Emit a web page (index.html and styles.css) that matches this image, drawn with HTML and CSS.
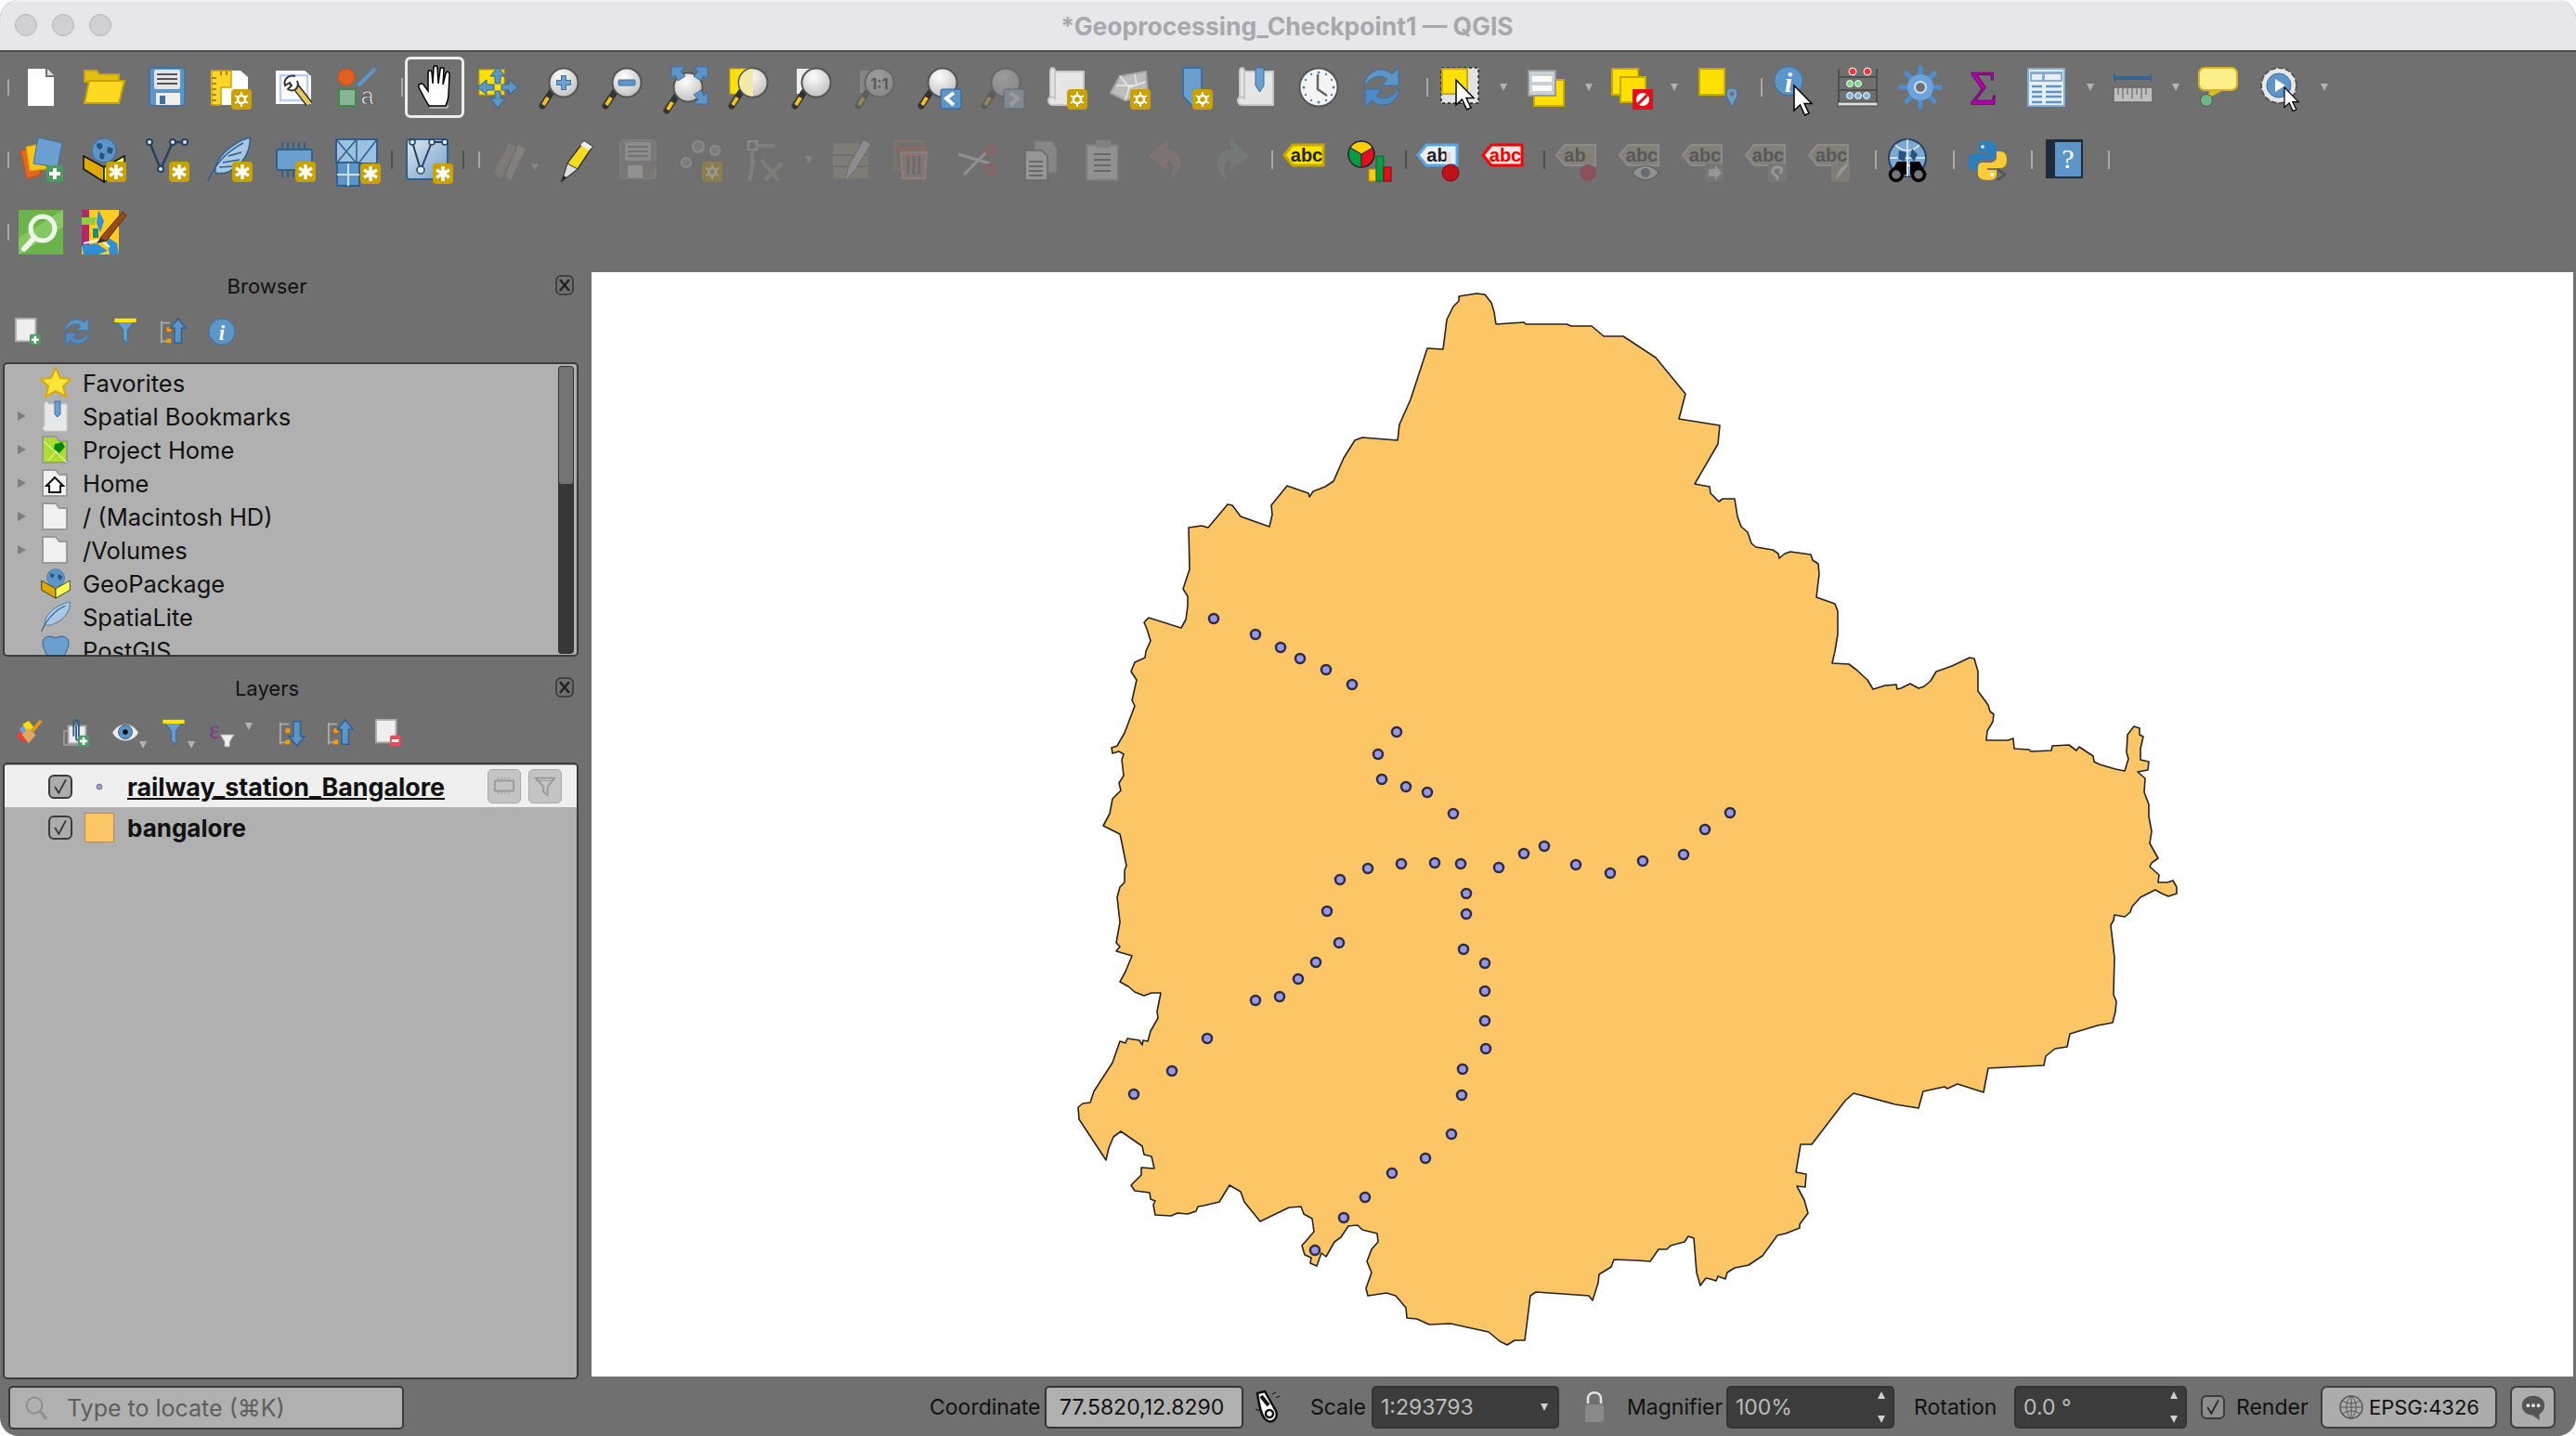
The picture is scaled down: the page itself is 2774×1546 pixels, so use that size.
FILE: index.html
```html
<!DOCTYPE html>
<html lang="en">
<head>
    <meta charset="UTF-8">
    <title>*Geoprocessing_Checkpoint1 — QGIS</title>
    <link rel="stylesheet" href="styles.css">
</head>
<body>
<svg class="defs" width="0" height="0">
    <defs>
        <radialGradient id="glass" cx="40%" cy="30%" r="80%"><stop offset="0" stop-color="#fff"/><stop offset="1" stop-color="#b9b9b9"/></radialGradient>
        <linearGradient id="paleblue" x1="0" y1="0" x2="1" y2="1"><stop offset="0" stop-color="#dfe9f3"/><stop offset="1" stop-color="#6f9cc7"/></linearGradient>
        <g id="lens">
            <path d="M12 27L2 42" stroke="#333" stroke-width="7" stroke-linecap="round"/>
            <path d="M8 33L3 41" stroke="#f5c518" stroke-width="4"/>
            <circle cx="25" cy="17" r="15.5" fill="url(#glass)" stroke="#555" stroke-width="2"/>
        </g>
        <g id="cursor"><path d="M0 0V27L6.500 21 11.500 32 16 30 11 19.500H19Z" fill="#fff" stroke="#000" stroke-width="1.500"/></g>
        <g id="star">
            <rect width="22" height="22" rx="4" fill="#c9a200"/>
            <path d="M11 3V19M4 7L18 15M18 7L4 15" stroke="#fff" stroke-width="3.500"/>
        </g>
        <g id="sun">
            <rect width="22" height="22" rx="4" fill="#c9a200"/>
            <path d="M11 3V19M4 7L18 15M18 7L4 15" stroke="#fff" stroke-width="2"/>
            <circle cx="11" cy="11" r="4" fill="#c9a200" stroke="#fff" stroke-width="2.500"/>
        </g>
        <g id="plus">
            <rect width="18" height="18" rx="3" fill="#4f9a5e"/>
            <path d="M9 3V15M3 9H15" stroke="#fff" stroke-width="4"/>
        </g>
        <g id="scroll">
            <path d="M5 5C5 0 10 0 10 5H41V41H8C2 41 2 34 5 33Z" fill="#e6e6e6" stroke="#c9c9c9" stroke-width="2"/>
            <path d="M10 5V34C8 32 6 32 5 33" fill="none" stroke="#bbb" stroke-width="1.500"/>
        </g>
        <g id="tagshape"><path d="M9 0H42V22H9L0 11Z"/></g>
        <g id="sync">
            <path d="M3 21C4 5 22-3 33 8L40 1V20H22L28 13C20 7 10 11 3 21Z" fill="#5c95c8" stroke="#3a6ea5"/>
            <path d="M41 23C40 39 22 47 11 36L4 43V24H22L16 31C24 37 34 33 41 23Z" fill="#4f8ac4" stroke="#3a6ea5"/>
        </g>
        <g id="funnel">
            <path d="M2 2H30L19 16V34L13 28V16Z" fill="#6b9ccb" stroke="#3d6f9f" stroke-width="1.500"/>
            <path d="M2 1H30V6H2Z" fill="#ffe600"/>
        </g>
        <g id="infoball">
            <circle cx="16" cy="16" r="15" fill="#5c95c8" stroke="#3a6ea5"/>
            <text x="16" y="26" class="info-i">i</text>
        </g>
    </defs>
</svg>
<div class="window">
    <header class="titlebar">
        <div class="lights"><span class="light"></span><span class="light"></span><span class="light"></span></div>
        <div class="title">*Geoprocessing_Checkpoint1 — QGIS</div>
    </header>

    <div class="toolbars">
        <div class="tb-row">
            <span class="handle"></span>
            <div class="tb"><svg class="ic" viewBox="0 0 44 44"><path d="M8 2H27V11H36V42H8Z" fill="#fff"/><path d="M29 2L36 9H29Z" fill="#ddd"/></svg></div>
            <div class="tb"><svg class="ic" viewBox="0 0 44 44"><path d="M1 8V4H14L17 8H38V16H1Z" fill="#e3c010" stroke="#c9a400" stroke-width="2"/><path d="M6 15H44L38 39H1Z" fill="#ffd91f" stroke="#c9a400" stroke-width="2"/></svg></div>
            <div class="tb"><svg class="ic" viewBox="0 0 44 44"><rect x="3" y="1" width="38" height="41" rx="4" fill="#5c95c8" stroke="#3d6f9f" stroke-width="1.500"/><rect x="8" y="3" width="28" height="21" rx="2" fill="#e4e4e4"/><path d="M11 8H33M11 13H33M11 18H33" stroke="#555" stroke-width="2"/><rect x="10" y="28" width="26" height="13" fill="#eee"/><rect x="14" y="31" width="6" height="9" fill="#3d6f9f"/></svg></div>
            <div class="tb"><svg class="ic" viewBox="0 0 44 44"><path d="M1 4H33L41 11V41H1Z" fill="#fff"/><path d="M2 4H23V22H12V41H2Z" fill="#ffd52a" stroke="#c9a400" stroke-width="1.500"/><path d="M2 12H7M2 18H7M2 24H7M2 30H7M2 36H7M12 4V9M18 4V9" stroke="#a88a00" stroke-width="2"/><use href="#sun" x="23" y="24"/></svg></div>
            <div class="tb"><svg class="ic" viewBox="0 0 44 44"><path d="M3 4H34L41 10V40H3Z" fill="#fff"/><rect x="8" y="9" width="29" height="27" fill="none" stroke="#b9cdf0" stroke-width="2.500"/><path d="M19 14L39 40" stroke="#333" stroke-width="8"/><path d="M21 17L39 40" stroke="#e9c95c" stroke-width="5"/><path d="M24 10C16 8 11 14 13 20L18 17 20 20 16 24C22 28 29 23 26 15" fill="#fff" stroke="#333" stroke-width="2"/></svg></div>
            <div class="tb"><svg class="ic" viewBox="0 0 44 44"><ellipse cx="11" cy="11" rx="9" ry="9" fill="#e35f20" stroke="#c94e10"/><path d="M25 19L41 3" stroke="#5c95c8" stroke-width="4" stroke-linecap="round"/><rect x="3" y="24" width="18" height="18" fill="#88b594" stroke="#3c8a4d" stroke-width="2"/><text x="26" y="40" class="style-a">a</text></svg></div>
            <span class="sep"></span>
            <div class="tb"><div class="pressed"><svg class="ic" viewBox="0 0 44 44"><path d="M14 45H34L36 41H16Z" fill="#aaa"/><path d="M14 42C10 36 6 28 3 22 2 18 6 17 8 19L13 26V6C13 3 17 3 17 6L18 18 19 1C19-2 23-2 23 1L24 18 26 3C26 0 30 0 30 3L29 19 32 7C33 4 36 5 36 8L35 30C35 35 33 38 32 42Z" fill="#fff" stroke="#000" stroke-width="1.500"/></svg></div></div>
            <div class="tb"><svg class="ic" viewBox="0 0 44 44"><rect x="2" y="3" width="27" height="27" fill="#ffe000" stroke="#c9a800"/><g fill="#5c95c8" stroke="#34648f"><path d="M22 0L30 10H25V18H19V10H14Z"/><path d="M44 22L34 30V25H26V19H34V14Z"/><path d="M22 44L14 34H19V26H25V34H30Z"/><path d="M0 22L10 14V19H18V25H10V30Z"/></g></svg></div>
            <div class="tb"><svg class="ic" viewBox="0 0 44 44"><use href="#lens"/><path d="M17 17H33M25 9V25" stroke="#3d6f9f" stroke-width="6"/><path d="M18 17H32M25 10V24" stroke="#6ba3d6" stroke-width="4"/></svg></div>
            <div class="tb"><svg class="ic" viewBox="0 0 44 44"><use href="#lens"/><rect x="16" y="14" width="18" height="6" rx="1" fill="#5c95c8" stroke="#3d6f9f"/></svg></div>
            <div class="tb"><svg class="ic" viewBox="0 0 44 44"><use href="#lens" transform="translate(-2 5)"/><g fill="#5c95c8" stroke="#3d6f9f"><path d="M5 0H20L15 5 20 10 12 15 9 9 5 13Z"/><path d="M44 0H29L34 5 29 10 37 15 40 9 44 13Z"/><path d="M44 40H29L34 35 29 30 37 25 40 31 44 27Z"/></g></svg></div>
            <div class="tb"><svg class="ic" viewBox="0 0 44 44"><rect x="0" y="2" width="28" height="27" fill="#ffe000" stroke="#c9a800"/><use href="#lens"/><path d="M25 2A15 15 0 0 0 25 32Z" fill="#f2eaa8"/></svg></div>
            <div class="tb"><svg class="ic" viewBox="0 0 44 44"><rect x="4" y="2" width="26" height="27" fill="#eee"/><use href="#lens"/></svg></div>
            <div class="tb off"><svg class="ic" viewBox="0 0 44 44"><rect x="4" y="4" width="26" height="24" fill="#bbb"/><use href="#lens"/><text x="25" y="24" class="ratio">1:1</text></svg></div>
            <div class="tb"><svg class="ic" viewBox="0 0 44 44"><use href="#lens"/><rect x="23" y="24" width="22" height="21" rx="2" fill="#5c95c8" stroke="#2f5f8f"/><path d="M37 28L29 34 37 41" fill="none" stroke="#fff" stroke-width="4"/></svg></div>
            <div class="tb off"><svg class="ic" viewBox="0 0 44 44"><use href="#lens"/><rect x="23" y="24" width="22" height="21" rx="2" fill="#adc4dc" stroke="#2f5f8f"/><path d="M30 28L38 34 30 41" fill="none" stroke="#fff" stroke-width="4"/></svg></div>
            <div class="tb"><svg class="ic" viewBox="0 0 44 44"><use href="#scroll"/><use href="#sun" x="23" y="24"/></svg></div>
            <div class="tb"><svg class="ic" viewBox="0 0 44 44"><path d="M12 10L40 5 42 30 18 36 2 28Z" fill="#bdbdbd" stroke="#a5a5a5" stroke-width="2"/><path d="M12 10L22 22 18 36M22 22L40 16M28 8L30 20M8 20L30 20" fill="none" stroke="#e8e8e8" stroke-width="1.500"/><use href="#sun" x="23" y="24"/></svg></div>
            <div class="tb"><svg class="ic" viewBox="0 0 44 44"><path d="M12 1H32V32L22 42 12 32Z" fill="#6a9fd0" stroke="#3d6f9f" stroke-width="2"/><use href="#sun" x="22" y="24"/></svg></div>
            <div class="tb"><svg class="ic" viewBox="0 0 44 44"><use href="#scroll"/><path d="M22 1H31V20L26.500 27 22 20Z" fill="#6a9fd0" stroke="#3d6f9f"/></svg></div>
            <div class="tb"><svg class="ic" viewBox="0 0 44 44"><circle cx="22" cy="22" r="20.500" fill="#f4f4f4" stroke="#555" stroke-width="2"/><circle cx="22" cy="6" r="1.500" fill="#4c86bd"/><circle cx="22" cy="38" r="1.500" fill="#4c86bd"/><circle cx="6" cy="22" r="1.500" fill="#4c86bd"/><circle cx="38" cy="22" r="1.500" fill="#4c86bd"/><circle cx="30" cy="8" r="1.200" fill="#4c86bd"/><circle cx="36" cy="14" r="1.200" fill="#4c86bd"/><circle cx="36" cy="30" r="1.200" fill="#4c86bd"/><circle cx="30" cy="36" r="1.200" fill="#4c86bd"/><circle cx="14" cy="36" r="1.200" fill="#4c86bd"/><circle cx="8" cy="30" r="1.200" fill="#4c86bd"/><circle cx="8" cy="14" r="1.200" fill="#4c86bd"/><circle cx="14" cy="8" r="1.200" fill="#4c86bd"/><path d="M21 8V24L31 31" fill="none" stroke="#666" stroke-width="2.500"/></svg></div>
            <div class="tb"><svg class="ic" viewBox="0 0 44 44"><use href="#sync"/></svg></div>
            <span class="sep s14"></span>
            <div class="tb dd"><svg class="ic" viewBox="0 0 44 44"><rect x="2" y="1" width="40" height="38" fill="#e3e3e3" stroke="#222" stroke-width="1.500" stroke-dasharray="3 3"/><rect x="3" y="2" width="27" height="27" fill="#ffe000" stroke="#c9a800" stroke-width="2"/><use href="#cursor" transform="translate(18 14)"/></svg><i class="arr"></i></div>
            <div class="tb dd"><svg class="ic" viewBox="0 0 44 44"><rect x="10" y="14" width="32" height="28" fill="#ffe000" stroke="#c9a800" stroke-width="2"/><rect x="4" y="4" width="29" height="27" fill="#c7d2d8" stroke="#999" stroke-width="2"/><rect x="8" y="10" width="21" height="6" fill="#fff"/><rect x="8" y="20" width="21" height="6" fill="#fff"/></svg><i class="arr"></i></div>
            <div class="tb dd"><svg class="ic" viewBox="0 0 44 44"><rect x="2" y="2" width="28" height="28" fill="#ffe000" stroke="#c9a800" stroke-width="2"/><rect x="11" y="11" width="27" height="27" fill="#ffe000" stroke="#c9a800" stroke-width="2"/><rect x="24" y="24" width="22" height="22" fill="#e0101c"/><circle cx="35" cy="35" r="7" fill="#fff"/><path d="M30 40L40 30" stroke="#e0101c" stroke-width="3"/></svg><i class="arr"></i></div>
            <div class="tb"><svg class="ic" viewBox="0 0 44 44"><rect x="4" y="2" width="27" height="28" fill="#ffe000" stroke="#c9a800" stroke-width="2"/><path d="M39 23C35 23 33 26 33 29 33 33 37 38 39 43 41 38 45 33 45 29 45 26 43 23 39 23Z" fill="#6f9fc2" stroke="#3d6f9f"/><circle cx="39" cy="29" r="2.500" fill="#707070"/></svg></div>
            <span class="sep"></span>
            <div class="tb"><svg class="ic" viewBox="0 0 44 44"><circle cx="16" cy="15" r="15.500" fill="#5c95c8" stroke="#3a6ea5"/><text x="16" y="27" class="info-big">i</text><use href="#cursor" transform="translate(22 20)"/></svg></div>
            <div class="tb"><svg class="ic" viewBox="0 0 44 44"><path d="M2 2V41M43 2V41M2 11H43M2 25H43" stroke="#444" stroke-width="1.500"/><rect x="1" y="38" width="43" height="4" fill="#ddd" stroke="#444"/><g fill="#f33" stroke="#fff"><circle cx="17" cy="5" r="4"/><circle cx="33" cy="5" r="4"/></g><g fill="#7fd88a" stroke="#fff"><circle cx="14" cy="18" r="3.500"/><circle cx="23" cy="18" r="3.500"/></g><g fill="#7db5dc" stroke="#fff"><circle cx="14" cy="31" r="3.500"/><circle cx="23" cy="31" r="3.500"/><circle cx="32" cy="31" r="3.500"/></g></svg></div>
            <div class="tb"><svg class="ic" viewBox="0 0 44 44"><g stroke="#4d8ed0" stroke-width="5" stroke-linecap="round"><path d="M22 1V43M1 22H43M7 7L37 37M37 7L7 37"/></g><circle cx="22" cy="22" r="14" fill="#6ba4dc"/><circle cx="22" cy="22" r="6" fill="#707070" stroke="#cfe0f0" stroke-width="2"/></svg></div>
            <div class="tb"><svg class="ic" viewBox="0 0 44 44"><text x="22" y="41" class="sigma">Σ</text></svg></div>
            <div class="tb dd"><svg class="ic" viewBox="0 0 44 44"><rect x="2" y="2" width="39" height="40" fill="#e8eef5" stroke="#80aed6" stroke-width="2"/><path d="M4 5H39V16H4Z" fill="#80aed6"/><rect x="6" y="8" width="11" height="6" fill="#e8eef5"/><rect x="20" y="8" width="17" height="6" fill="#e8eef5"/><path d="M6 21H17M21 21H38M6 27H17M21 27H38M6 32H17M21 32H38M6 38H17M21 38H38" stroke="#5c95c8" stroke-width="2.500"/></svg><i class="arr"></i></div>
            <div class="tb dd"><svg class="ic" viewBox="0 0 44 44"><path d="M3 8V16M42 8V16" stroke="#34648f" stroke-width="2"/><rect x="3" y="10" width="39" height="4" fill="#34648f"/><rect x="2" y="22" width="42" height="16" fill="#bfbfbf" stroke="#666" stroke-width="1.500"/><path d="M7 23V30M12 23V34M17 23V30M22 23V34M27 23V30M32 23V34M37 23V30" stroke="#555"/></svg><i class="arr"></i></div>
            <div class="tb"><svg class="ic" viewBox="0 0 44 44"><path d="M17 20L8 36 30 24Z" fill="#d9bc1f"/><circle cx="10" cy="36" r="6.500" fill="#6fb588" stroke="#555"/><rect x="2" y="1" width="41" height="24" rx="6" fill="#fdee8c" stroke="#d8b51c" stroke-width="2"/></svg></div>
            <div class="tb dd"><svg class="ic" viewBox="0 0 44 44"><circle cx="20" cy="20" r="19" fill="#e7e7e7" stroke="#555" stroke-width="2" stroke-dasharray="6 2"/><circle cx="20" cy="20" r="13" fill="#5c95c8" stroke="#3a6ea5"/><path d="M16 13L27 20 16 27Z" fill="#fff"/><use href="#cursor" transform="translate(26 22) scale(.8)"/></svg><i class="arr"></i></div>
        </div>

        <div class="tb-row">
            <span class="handle"></span>
            <div class="tb"><svg class="ic" viewBox="0 0 44 44"><path d="M0 12L14 9 22 38 7 43Z" fill="#e6651f" stroke="#b94e10"/><path d="M6 8L26 4 28 32 10 34Z" fill="#f5c518" stroke="#c9a400"/><path d="M19 -2L45 4 40 30 14 26Z" fill="#6a9fd0" stroke="#3d6f9f"/><use href="#plus" x="28" y="28"/></svg></div>
            <div class="tb"><svg class="ic" viewBox="0 0 44 44"><circle cx="22" cy="12" r="13" fill="#5c95c8" stroke="#3d6f9f"/><path d="M14 5C18 3 22 6 20 9 18 12 14 11 14 5ZM26 8L32 10 30 16 25 14ZM18 14L23 16 21 22 17 20Z" fill="#26537f"/><path d="M0 18L22 30V46L0 32Z" fill="#dcaa00" stroke="#111" stroke-width="1.500"/><path d="M44 18L22 30V46L44 32Z" fill="#ffff55" stroke="#111" stroke-width="1.500"/><use href="#star" x="24" y="24"/></svg></div>
            <div class="tb"><svg class="ic" viewBox="0 0 44 44"><path d="M3 3L15 32 28 3H41" fill="none" stroke="#26425f" stroke-width="2.500"/><g fill="#dfe8f0" stroke="#26425f" stroke-width="2"><circle cx="3" cy="3" r="3"/><circle cx="15" cy="32" r="3"/><circle cx="28" cy="3" r="3"/><circle cx="41" cy="3" r="3"/></g><use href="#star" x="24" y="24"/></svg></div>
            <div class="tb"><svg class="ic" viewBox="0 0 44 44"><path d="M43-2C44 12 36 28 20 35 12 38 8 36 6 36 4 22 22 4 43-2Z" fill="#a9c8e6" stroke="#2e5f8d" stroke-width="1.500"/><path d="M-2 45C4 30 16 14 36 4M20 18L34 14M14 25L32 22M10 30L26 29" fill="none" stroke="#2e5f8d" stroke-width="1.500"/><use href="#star" x="24" y="24"/></svg></div>
            <div class="tb"><svg class="ic" viewBox="0 0 44 44"><rect x="4" y="11" width="38" height="22" rx="2" fill="#6a9fd0" stroke="#2e5f8d" stroke-width="2"/><path d="M10 3V11M16 3V11M22 3V11M28 3V11M34 3V11M10 33V41M16 33V41M22 33V41" stroke="#2e5f8d" stroke-width="2"/><use href="#star" x="24" y="24"/></svg></div>
            <div class="tb"><svg class="ic" viewBox="0 0 44 44"><rect x="0" y="0" width="44" height="26" fill="#9cc0e0" stroke="#2e5f8d" stroke-width="2"/><path d="M0 0L22 26M22 0L0 26M22 0V26M44 0L24 26" stroke="#2e5f8d" stroke-width="1.500"/><rect x="1" y="27" width="24" height="25" fill="#5c95c8" stroke="#2e5f8d" stroke-width="2" transform="translate(0 -2)"/><path d="M13 26V50M1 38H25" stroke="#cfe0f0" stroke-width="2"/><use href="#star" x="26" y="26"/></svg></div>
            <span class="sep s8 dark"></span>
            <div class="tb"><svg class="ic" viewBox="0 0 44 44"><rect x="0" y="0" width="44" height="43" rx="3" fill="url(#paleblue)" stroke="#2e5f8d" stroke-width="2"/><path d="M6 3L15 33 27 3" fill="none" stroke="#26425f" stroke-width="2"/><path d="M27 3H41" stroke="#26425f" stroke-width="2"/><g fill="#dfe8f0" stroke="#26425f" stroke-width="1.500"><circle cx="6" cy="3" r="3"/><circle cx="15" cy="33" r="4"/><circle cx="27" cy="3" r="3"/><circle cx="41" cy="3" r="3"/></g><use href="#star" x="28" y="26"/></svg></div>
            <span class="sep s10 dark"></span>
            <span class="handle gap"></span>
            <div class="tb inner off"><svg class="ic" viewBox="0 0 44 44"><path d="M14 40L28 6 36 10 20 44Z" fill="#b4a79f" stroke="#888"/><path d="M2 36L18 4 25 8 10 42Z" fill="#a0918a" stroke="#888"/></svg><i class="arr"></i></div>
            <div class="tb"><svg class="ic" viewBox="0 0 44 44"><path d="M7 45L14 24 31 2 40 8 24 32Z" fill="#f4dc1c" stroke="#333" stroke-width="1.500"/><path d="M13 26L24 32 7 45Z" fill="#ddd" stroke="#333"/><path d="M31 2L40 8 36 12 27 6Z" fill="#eee"/><path d="M7 45L9 39 12 41Z" fill="#222"/></svg></div>
            <div class="tb off"><svg class="ic" viewBox="0 0 44 44"><rect x="2" y="1" width="38" height="41" rx="4" fill="#8a8a8a" stroke="#aaa" stroke-width="1.500"/><rect x="7" y="3" width="28" height="20" fill="#ccc"/><path d="M10 8H32M10 13H32M10 18H32" stroke="#777" stroke-width="2"/><rect x="10" y="28" width="16" height="13" fill="#ddd"/><path d="M26 44L32 28 39 22 42 26 36 34Z" fill="#9a7a70"/></svg></div>
            <div class="tb off"><svg class="ic" viewBox="0 0 44 44"><g fill="#999" stroke="#ccc" stroke-width="2"><circle cx="18" cy="8" r="6"/><circle cx="36" cy="12" r="5"/><circle cx="5" cy="25" r="5"/></g><use href="#sun" x="22" y="24"/></svg></div>
            <div class="tb dd off"><svg class="ic" viewBox="0 0 44 44"><rect x="4" y="2" width="9" height="9" fill="none" stroke="#ccc" stroke-width="2"/><path d="M13 7H32M8 11V30M5 45L10 22M22 44L40 26M36 44L18 22" stroke="#a79f8d" stroke-width="4"/></svg><i class="arr"></i></div>
            <div class="tb off"><svg class="ic" viewBox="0 0 44 44"><rect x="3" y="4" width="38" height="12" fill="#a0987e"/><rect x="3" y="18" width="38" height="10" fill="#a0987e"/><rect x="3" y="30" width="38" height="12" fill="#a0987e"/><path d="M15 46L20 28 36 0 44 5 28 32Z" fill="#ccc" stroke="#555"/></svg></div>
            <div class="tb off"><svg class="ic" viewBox="0 0 44 44"><rect x="2" y="2" width="30" height="30" fill="none" stroke="#a0885c" stroke-width="3"/><path d="M4 10H36" stroke="#d05040" stroke-width="4"/><path d="M8 14H36L34 42H10Z" fill="#b08a80" stroke="#d0a090" stroke-width="2"/><path d="M16 18V38M22 18V38M28 18V38" stroke="#666" stroke-width="3"/></svg></div>
            <div class="tb off"><svg class="ic" viewBox="0 0 44 44"><path d="M2 16L36 26M8 38L32 14" stroke="#ddd" stroke-width="3"/><circle cx="37" cy="12" r="5" fill="none" stroke="#d04040" stroke-width="3"/><circle cx="37" cy="32" r="5" fill="none" stroke="#d04040" stroke-width="3"/></svg></div>
            <div class="tb off"><svg class="ic" viewBox="0 0 44 44"><path d="M16 2H34L40 9V36H16Z" fill="#bbb" stroke="#888"/><path d="M6 12H24L30 18V44H6Z" fill="#eee" stroke="#555" stroke-width="1.500"/><path d="M10 24H25M10 29H25M10 34H25M10 39H25" stroke="#555" stroke-width="2"/></svg></div>
            <div class="tb off"><svg class="ic" viewBox="0 0 44 44"><rect x="4" y="6" width="34" height="38" fill="#ddd" stroke="#999" stroke-width="2"/><rect x="14" y="1" width="16" height="8" fill="#aaa"/><path d="M12 16H30M12 22H30M12 28H30M12 34H30" stroke="#555" stroke-width="2"/></svg></div>
            <div class="tb off"><svg class="ic" viewBox="0 0 44 44"><path d="M22 2L4 18 22 32V22C30 22 33 30 28 40 40 32 40 12 22 12Z" fill="#9c7a70" stroke="#c09080"/></svg></div>
            <div class="tb off"><svg class="ic" viewBox="0 0 44 44"><path d="M24 2L42 18 24 32V22C16 22 13 30 18 42 6 32 6 12 24 12Z" fill="#7e9088" stroke="#8aa090"/></svg></div>
            <span class="sep s13"></span>
            <div class="tb"><svg class="ic" viewBox="0 0 44 44"><use href="#tagshape" fill="#ffe400" stroke="#c9a800" stroke-width="3" y="6" x="0"/><text x="24" y="24" class="tag-t">abc</text></svg></div>
            <div class="tb"><svg class="ic" viewBox="0 0 44 44"><circle cx="15" cy="16" r="14" fill="#e0101c" stroke="#222" stroke-width="1.500"/><path d="M15 16L3 9A14 14 0 0 1 27 9Z" fill="#ffcc00" stroke="#222"/><path d="M15 16L3 9A14 14 0 0 0 15 30Z" fill="#0a9a42" stroke="#222"/><rect x="23" y="32" width="8" height="13" fill="#ffcc00" stroke="#a88a00"/><rect x="31" y="18" width="8" height="27" fill="#0a9a42" stroke="#063"/><rect x="39" y="30" width="8" height="15" fill="#e0101c" stroke="#800"/></svg></div>
            <span class="sep s8b dark"></span>
            <div class="tb"><svg class="ic" viewBox="0 0 44 44"><use href="#tagshape" fill="#e8f1fa" stroke="#58a6e8" stroke-width="3" y="6"/><text x="21" y="24" class="tag-t">ab</text><path d="M33 14V30" stroke="#ddd" stroke-width="5"/><circle cx="35" cy="36" r="9" fill="#c0101c" stroke="#7a0a10"/></svg></div>
            <div class="tb"><svg class="ic" viewBox="0 0 44 44"><use href="#tagshape" fill="#ffe4e4" stroke="#f00" stroke-width="3" x="2" y="6"/><text x="26" y="24" class="tag-t red">abc</text></svg></div>
            <span class="sep s13 dark"></span>
            <div class="tb off"><svg class="ic" viewBox="0 0 44 44"><use href="#tagshape" fill="#b0a78a" stroke="#ccc" stroke-width="2" y="6"/><text x="20" y="24" class="tag-t">ab</text><circle cx="34" cy="36" r="9" fill="#c0101c"/></svg></div>
            <div class="tb off"><svg class="ic" viewBox="0 0 44 44"><use href="#tagshape" fill="#b0a78a" stroke="#ccc" stroke-width="2" y="6"/><text x="24" y="24" class="tag-t">abc</text><path d="M14 36C22 26 34 26 42 36 34 46 22 46 14 36Z" fill="#ddd" stroke="#222"/><circle cx="28" cy="36" r="5" fill="#567"/></svg></div>
            <div class="tb off"><svg class="ic" viewBox="0 0 44 44"><use href="#tagshape" fill="#b0a78a" stroke="#ccc" stroke-width="2" y="6"/><text x="24" y="24" class="tag-t">abc</text><rect x="24" y="26" width="20" height="20" rx="3" fill="#888"/><path d="M28 32H35V28L42 36 35 44V40H28Z" fill="#eee"/></svg></div>
            <div class="tb off"><svg class="ic" viewBox="0 0 44 44"><use href="#tagshape" fill="#b0a78a" stroke="#ccc" stroke-width="2" y="6"/><text x="24" y="24" class="tag-t">abc</text><rect x="24" y="26" width="20" height="20" rx="3" fill="#888"/><path d="M34 44V40C26 36 28 30 34 30 40 30 40 36 36 36" fill="none" stroke="#eee" stroke-width="3"/></svg></div>
            <div class="tb off"><svg class="ic" viewBox="0 0 44 44"><use href="#tagshape" fill="#b0a78a" stroke="#ccc" stroke-width="2" y="6"/><text x="24" y="24" class="tag-t">abc</text><rect x="24" y="26" width="20" height="20" rx="3" fill="#a09880"/><path d="M28 44L32 34 40 26 42 28 34 38Z" fill="#eee"/></svg></div>
            <span class="sep s17"></span>
            <div class="tb"><svg class="ic" viewBox="0 0 44 44"><circle cx="21" cy="20" r="20" fill="#7aa8d2" stroke="#26425f" stroke-width="2"/><path d="M2 20H40M21 0V40M8 6C16 14 26 14 34 6M8 34C16 26 26 26 34 34" fill="none" stroke="#e8f0f8" stroke-width="1.500"/><path d="M12 12L20 14 18 24 11 21ZM26 10L32 16 28 24 24 18Z" fill="#26537f"/><g fill="#000"><path d="M10 24H20V38H2Z"/><path d="M24 24H34L42 38H24Z"/></g><circle cx="9" cy="38" r="6.500" fill="#777" stroke="#000" stroke-width="3.500"/><circle cx="33" cy="38" r="6.500" fill="#777" stroke="#000" stroke-width="3.500"/></svg></div>
            <span class="sep"></span>
            <div class="tb"><svg class="ic" viewBox="0 0 44 44"><path d="M22 2C14 2 13 5 13 9V13H23V15H9C4 15 2 19 2 24 2 30 5 33 9 33H13V27C13 23 16 21 20 21H28C31 21 33 19 33 16V9C33 5 30 2 22 2Z" fill="#2c7fb8"/><circle cx="18" cy="8" r="2" fill="#cde"/><path d="M24 44C32 44 33 41 33 37V33H23V31H37C42 31 44 27 44 22 44 16 41 13 37 13H33V19C33 23 30 25 26 25H18C15 25 13 27 13 30V37C13 41 16 44 24 44Z" fill="#ffcc33"/><circle cx="28" cy="38" r="2" fill="#fff"/><path d="M34 32L42 38 34 44" fill="none" stroke="#555" stroke-width="2.500"/></svg></div>
            <span class="sep"></span>
            <div class="tb"><svg class="ic" viewBox="0 0 44 44"><rect x="2" y="0" width="40" height="42" fill="#1f2b38"/><rect x="12" y="3" width="28" height="37" fill="#5c95c8"/><text x="26" y="31" class="help-q">?</text></svg></div>
            <span class="sep s15"></span>
        </div>

        <div class="tb-row">
            <span class="handle"></span>
            <div class="tb"><svg class="ic big" viewBox="0 0 48 48"><rect width="48" height="48" fill="#6bb449"/><path d="M0 48V30L48 0V18Z" fill="#86c762"/><circle cx="26" cy="20" r="13" fill="none" stroke="#eef6e8" stroke-width="5"/><path d="M17 30L6 42" stroke="#eef6e8" stroke-width="6" stroke-linecap="round"/></svg></div>
            <div class="tb"><svg class="ic big" viewBox="0 0 48 48"><path d="M0 0H40V48H0Z" fill="#ffcc1f"/><path d="M0 0H8V8H0ZM0 16H8V40H0Z" fill="#b5256b"/><path d="M0 8H16L14 16H0Z" fill="#8fce3c"/><path d="M18 0L24 12 20 24 16 14Z" fill="#2f8fd8"/><path d="M12 20H18V30H12Z" fill="#1a8f6a"/><path d="M0 38L16 36 28 44 18 48H2ZM26 28L38 36 40 48H30Z" fill="#2f8fd8"/><path d="M2 36L20 32 30 40" fill="none" stroke="#fff" stroke-width="2"/><path d="M20 30L44 2 48 6 26 34Z" fill="#9c4a14" stroke="#5a2a08"/><path d="M16 36L20 30 26 34Z" fill="#333"/></svg></div>
        </div>
    </div>

    <div class="main">
        <aside class="docks">
            <section class="dock">
                <div class="dock-title"><span>Browser</span><svg class="dock-close" viewBox="0 0 20 22"><rect x="1" y="1" width="18" height="20" rx="5" fill="none" stroke="#333" stroke-width="1.500"/><path d="M5 5L15 17M15 5L5 17" stroke="#222" stroke-width="2.500"/></svg></div>
                <div class="dock-tools browser-tools">
                    <svg class="tool" viewBox="0 0 32 32"><rect x="1" y="1" width="23" height="26" fill="#eee" stroke="#aaa" stroke-width="2"/><use href="#plus" transform="translate(17 19) scale(.7)"/></svg>
                    <svg class="tool" viewBox="0 0 44 44"><use href="#sync"/></svg>
                    <svg class="tool" viewBox="0 0 32 36"><use href="#funnel"/></svg>
                    <svg class="tool" viewBox="0 0 32 32"><path d="M2 4V29M2 6H12M2 27H12" stroke="#aaa" stroke-width="2"/><rect x="8" y="11" width="5" height="5" fill="#f90"/><rect x="8" y="24" width="5" height="5" fill="#f90"/><path d="M21 1L30 12H25V29H17V12H12Z" fill="#5c95c8" stroke="#2f5f8f" stroke-width="1.500"/></svg>
                    <svg class="tool" viewBox="0 0 32 32"><use href="#infoball"/></svg>
                </div>
                <div class="tree browser-tree">
                    <ul class="tree-list">
                        <li><i class="branch none"></i><svg class="node" viewBox="0 0 32 32"><path d="M16 0L21 11 32 12 24 20 27 31 16 25 5 31 8 20 0 12 11 11Z" fill="#ffe53a" stroke="#dba800" stroke-width="2"/></svg>Favorites</li>
                        <li><i class="branch"></i><svg class="node" viewBox="0 0 32 32"><path d="M4 3C4 0 8 0 8 3H28V32H5C2 32 2 27 4 26Z" fill="#e8e8e8" stroke="#ccc"/><path d="M15 0H21V14L18 17 15 14Z" fill="#6a9fd0" stroke="#3d6f9f"/></svg>Spatial Bookmarks</li>
                        <li><i class="branch"></i><svg class="node" viewBox="0 0 32 32"><path d="M2 2H16L20 7H28V30H2Z" fill="#aede2c" stroke="#999" stroke-width="2"/><path d="M3 7L28 30M8 28L18 16" stroke="#fff"/><path d="M15 10L23 8 26 13 20 20 14 15Z" fill="#008800"/></svg>Project Home</li>
                        <li><i class="branch"></i><svg class="node" viewBox="0 0 32 32"><path d="M2 2H16L20 7H28V30H2Z" fill="#f0f0f0" stroke="#999" stroke-width="2"/><path d="M15 10L24 19H21V26H9V19H6Z" fill="#fff" stroke="#111" stroke-width="2"/></svg>Home</li>
                        <li><i class="branch"></i><svg class="node" viewBox="0 0 32 32"><path d="M2 2H16L20 7H28V30H2Z" fill="#f0f0f0" stroke="#999" stroke-width="2"/></svg>/ (Macintosh HD)</li>
                        <li><i class="branch"></i><svg class="node" viewBox="0 0 32 32"><path d="M2 2H16L20 7H28V30H2Z" fill="#f0f0f0" stroke="#999" stroke-width="2"/></svg>/Volumes</li>
                        <li><i class="branch none"></i><svg class="node" viewBox="0 0 44 44"><circle cx="22" cy="14" r="13" fill="#5c95c8" stroke="#3d6f9f"/><path d="M14 7L20 9 18 14 14 12ZM26 8L32 12 29 18 25 14Z" fill="#26537f"/><path d="M1 18L22 30V44L1 32Z" fill="#dcaa00" stroke="#111"/><path d="M43 18L22 30V44L43 32Z" fill="#ffff55" stroke="#111"/></svg>GeoPackage</li>
                        <li><i class="branch none"></i><svg class="node" viewBox="0 0 44 44"><path d="M43 0C44 12 36 26 20 32 12 36 8 34 6 34 4 20 22 4 43 0Z" fill="#a9c8e6" stroke="#2e5f8d"/><path d="M1 44C6 30 18 14 36 6" fill="none" stroke="#2e5f8d" stroke-width="1.500"/></svg>SpatiaLite</li>
                        <li><i class="branch none"></i><svg class="node" viewBox="0 0 32 32"><path d="M2 8C2 0 12 0 16 3 20 0 30 0 30 8 30 16 24 20 24 30H8C8 20 2 16 2 8Z" fill="#6a9fd0" stroke="#2e5f8d"/></svg>PostGIS</li>
                    </ul>
                    <div class="scrollbar"><div class="scroll-thumb"></div></div>
                </div>
            </section>
            <section class="dock layers">
                <div class="dock-title"><span>Layers</span><svg class="dock-close" viewBox="0 0 20 22"><rect x="1" y="1" width="18" height="20" rx="5" fill="none" stroke="#333" stroke-width="1.500"/><path d="M5 5L15 17M15 5L5 17" stroke="#222" stroke-width="2.500"/></svg></div>
                <div class="dock-tools layer-tools">
                    <svg class="tool" viewBox="0 0 32 32"><path d="M2 20L10 8 18 18 12 28Z" fill="#e8403a"/><path d="M5 12L13 4 20 12 12 20Z" fill="#6a9fd0"/><path d="M9 6L16 2 22 10 14 14Z" fill="#ffe000"/><path d="M8 18L16 10 24 18 16 28Z" fill="#e0a860"/><path d="M20 14L30 2" stroke="#e89a10" stroke-width="4"/></svg>
                    <svg class="tool" viewBox="0 0 32 32"><rect x="1" y="14" width="16" height="16" fill="none" stroke="#999" stroke-width="2"/><rect x="6" y="8" width="20" height="20" fill="#eee" stroke="#aaa" stroke-width="2"/><path d="M12 20V5C12 0 18 0 18 5V22C18 25 15 25 15 22V8" fill="none" stroke="#2e5f8d" stroke-width="2"/><use href="#plus" transform="translate(17 19) scale(.72)"/></svg>
                    <span class="tool-dd"><svg class="tool" viewBox="0 0 32 24"><path d="M1 12C8 -1 24 -1 31 12 24 24 8 24 1 12Z" fill="#eee" stroke="#999"/><circle cx="16" cy="11" r="8" fill="#5c95c8" stroke="#2e5f8d"/><circle cx="16" cy="11" r="3" fill="#111"/></svg><i class="arr"></i></span>
                    <span class="tool-dd"><svg class="tool" viewBox="0 0 32 36"><use href="#funnel"/></svg><i class="arr"></i></span>
                    <span class="tool-dd epsilon-dd"><svg class="tool" viewBox="0 0 32 32"><text x="1" y="22" class="epsilon">ε</text><path d="M14 18H30L25 26V32H19V26Z" fill="#eee" stroke="#999"/></svg><i class="arr far"></i></span>
                    <svg class="tool" viewBox="0 0 32 32"><path d="M2 4V29M2 6H12M2 27H12" stroke="#aaa" stroke-width="2"/><rect x="8" y="11" width="5" height="5" fill="#f90"/><rect x="8" y="24" width="5" height="5" fill="#f90"/><path d="M21 31L30 20H25V3H17V20H12Z" fill="#5c95c8" stroke="#2f5f8f" stroke-width="1.500"/></svg>
                    <svg class="tool" viewBox="0 0 32 32"><path d="M2 4V29M2 6H12M2 27H12" stroke="#aaa" stroke-width="2"/><rect x="8" y="11" width="5" height="5" fill="#f90"/><rect x="8" y="24" width="5" height="5" fill="#f90"/><path d="M21 1L30 12H25V29H17V12H12Z" fill="#5c95c8" stroke="#2f5f8f" stroke-width="1.500"/></svg>
                    <svg class="tool" viewBox="0 0 32 32"><rect x="1" y="1" width="23" height="26" fill="#eee" stroke="#aaa" stroke-width="2"/><rect x="17" y="19" width="12" height="12" rx="2" fill="#f04a5a"/><path d="M19 25H27" stroke="#fff" stroke-width="3"/></svg>
                </div>
                <div class="tree layer-tree">
                    <div class="layer-row current">
                        <span class="check"><svg viewBox="0 0 26 26"><path d="M6 13L11 21 20 4" fill="none" stroke="#333" stroke-width="2"/></svg></span>
                        <span class="legend"><svg class="point" viewBox="0 0 8 8"><circle cx="4" cy="4" r="3" fill="#9a97e4" stroke="#777"/></svg></span>
                        <span class="layer-name">railway_station_Bangalore</span>
                        <span class="indicator"><svg viewBox="0 0 26 26"><rect x="2" y="7" width="22" height="12" rx="1" fill="none" stroke="#999" stroke-width="2"/><path d="M6 3V7M10 3V7M14 3V7M18 3V7M6 19V23M10 19V23M14 19V23M18 19V23" stroke="#999"/></svg></span>
                        <span class="indicator"><svg viewBox="0 0 26 26"><path d="M2 4H24L16 14V24L11 20V14Z" fill="none" stroke="#999" stroke-width="2"/><path d="M2 7H24" stroke="#999"/></svg></span>
                    </div>
                    <div class="layer-row">
                        <span class="check"><svg viewBox="0 0 26 26"><path d="M6 13L11 21 20 4" fill="none" stroke="#333" stroke-width="2"/></svg></span>
                        <span class="legend"><span class="swatch"></span></span>
                        <span class="layer-name plain">bangalore</span>
                    </div>
                </div>
            </section>
        </aside>
        <div class="canvas">
            <svg class="map" viewBox="637 293 2134 1189">
                <polygon class="boundary" points="1571,319 1590,316 1599,317 1606,326 1609,336 1611,349 1641,347 1643,349 1687,349 1692,351 1714,351 1727,362 1748,362 1783,385 1815,424 1808,451 1852,458 1850,478 1825,521 1841,524 1842,531 1851,540 1855,537 1868,537 1871,556 1875,567 1882,573 1886,585 1891,589 1909,592 1915,596 1916,601 1922,596 1928,594 1950,597 1952,603 1958,607 1959,618 1956,643 1976,650 1979,658 1979,683 1976,701 1973,714 1991,715 1999,721 2011,732 2017,742 2030,738 2042,737 2043,742 2047,741 2057,736 2066,741 2072,739 2079,733 2085,723 2102,717 2121,708 2126,709 2130,723 2130,744 2141,759 2143,766 2147,769 2146,777 2140,787 2139,797 2162,797 2168,795 2169,806 2185,807 2187,809 2209,808 2210,803 2228,802 2236,808 2239,804 2254,814 2255,820 2261,823 2278,828 2288,830 2292,817 2290,810 2291,791 2298,782 2304,784 2304,791 2308,793 2305,806 2305,818 2314,820 2313,829 2302,831 2310,838 2309,853 2314,866 2314,879 2317,895 2315,908 2324,924 2317,929 2315,933 2325,942 2324,950 2334,950 2340,948 2344,955 2344,962 2335,965 2328,962 2321,958 2305,966 2296,976 2294,982 2288,987 2277,985 2276,991 2273,996 2277,1031 2276,1071 2279,1078 2278,1089 2275,1101 2259,1104 2229,1113 2226,1127 2213,1129 2203,1137 2201,1147 2141,1150 2136,1176 2108,1167 2097,1172 2094,1170 2071,1175 2066,1193 2041,1189 1996,1177 1987,1185 1951,1232 1939,1232 1934,1262 1945,1264 1944,1278 1935,1277 1943,1292 1947,1306 1938,1318 1938,1322 1923,1328 1914,1330 1898,1352 1883,1362 1868,1365 1860,1370 1858,1377 1850,1374 1848,1379 1842,1377 1837,1376 1831,1384 1827,1370 1824,1333 1818,1331 1814,1337 1799,1341 1795,1345 1786,1345 1777,1358 1763,1357 1738,1356 1735,1364 1722,1372 1721,1381 1715,1400 1711,1395 1697,1394 1654,1391 1648,1395 1642,1443 1631,1443 1623,1448 1615,1444 1603,1434 1562,1425 1539,1426 1526,1420 1515,1419 1514,1408 1503,1395 1493,1392 1473,1395 1471,1387 1477,1370 1472,1358 1477,1345 1484,1337 1483,1328 1467,1324 1462,1319 1452,1320 1444,1332 1437,1337 1428,1353 1423,1349 1418,1363 1411,1360 1412,1354 1405,1351 1402,1341 1415,1326 1413,1312 1404,1307 1401,1299 1388,1300 1357,1315 1340,1294 1336,1283 1324,1276 1313,1294 1296,1298 1290,1299 1288,1304 1279,1307 1268,1306 1261,1309 1244,1308 1242,1297 1244,1293 1239,1291 1238,1284 1222,1282 1218,1276 1229,1265 1229,1257 1243,1258 1240,1245 1232,1243 1230,1234 1220,1227 1207,1218 1199,1224 1194,1236 1191,1249 1162,1205 1161,1192 1166,1188 1174,1187 1178,1175 1198,1144 1206,1121 1212,1123 1214,1118 1227,1120 1230,1125 1231,1120 1236,1121 1239,1110 1247,1096 1246,1089 1250,1069 1240,1069 1232,1072 1222,1068 1215,1062 1206,1057 1212,1046 1219,1029 1202,1024 1206,1019 1202,1015 1206,993 1203,966 1206,955 1211,950 1211,937 1213,932 1208,907 1206,898 1188,889 1195,876 1198,860 1207,851 1205,843 1210,835 1208,818 1210,812 1205,809 1198,811 1197,805 1203,803 1211,789 1222,760 1219,754 1224,732 1218,723 1222,713 1233,708 1234,701 1239,690 1235,677 1232,670 1237,665 1272,676 1277,667 1279,652 1279,642 1274,634 1281,613 1280,568 1294,566 1301,568 1322,543 1327,544 1336,556 1350,561 1367,567 1370,554 1369,544 1386,523 1409,531 1410,535 1414,529 1427,524 1436,518 1447,493 1459,474 1467,471 1505,474 1507,457 1519,430 1537,375 1554,376 1558,344 1565,330 1571,324"/>
                <g class="stations">
                    <circle cx="1307" cy="666" r="5"/><circle cx="1352" cy="683" r="5"/><circle cx="1379" cy="697" r="5"/><circle cx="1400" cy="709" r="5"/><circle cx="1428" cy="721" r="5"/><circle cx="1456" cy="737" r="5"/>
                    <circle cx="1504" cy="788" r="5"/><circle cx="1484" cy="812" r="5"/><circle cx="1488" cy="839" r="5"/><circle cx="1514" cy="847" r="5"/><circle cx="1537" cy="853" r="5"/><circle cx="1565" cy="876" r="5"/>
                    <circle cx="1863" cy="875" r="5"/><circle cx="1836" cy="893" r="5"/><circle cx="1813" cy="920" r="5"/><circle cx="1769" cy="927" r="5"/><circle cx="1734" cy="940" r="5"/><circle cx="1697" cy="931" r="5"/><circle cx="1663" cy="911" r="5"/><circle cx="1641" cy="919" r="5"/><circle cx="1614" cy="934" r="5"/><circle cx="1573" cy="930" r="5"/><circle cx="1545" cy="929" r="5"/><circle cx="1509" cy="930" r="5"/><circle cx="1473" cy="935" r="5"/><circle cx="1443" cy="947" r="5"/><circle cx="1429" cy="981" r="5"/><circle cx="1442" cy="1015" r="5"/><circle cx="1417" cy="1036" r="5"/><circle cx="1398" cy="1054" r="5"/><circle cx="1378" cy="1073" r="5"/><circle cx="1352" cy="1077" r="5"/><circle cx="1300" cy="1118" r="5"/><circle cx="1262" cy="1153" r="5"/><circle cx="1221" cy="1178" r="5"/>
                    <circle cx="1579" cy="962" r="5"/><circle cx="1579" cy="984" r="5"/><circle cx="1576" cy="1022" r="5"/><circle cx="1599" cy="1037" r="5"/><circle cx="1599" cy="1067" r="5"/><circle cx="1599" cy="1099" r="5"/><circle cx="1600" cy="1129" r="5"/><circle cx="1575" cy="1151" r="5"/><circle cx="1574" cy="1179" r="5"/><circle cx="1563" cy="1221" r="5"/><circle cx="1535" cy="1247" r="5"/><circle cx="1499" cy="1263" r="5"/><circle cx="1470" cy="1289" r="5"/><circle cx="1447" cy="1311" r="5"/><circle cx="1416" cy="1346" r="5"/>
                </g>
            </svg>
        </div>
    </div>

    <footer class="statusbar">
        <div class="locator">
            <svg class="loc-icon" viewBox="0 0 26 28"><circle cx="11" cy="11" r="8.500" fill="none" stroke="#8f8f8f" stroke-width="2"/><path d="M17 17L24 26" stroke="#8f8f8f" stroke-width="3"/></svg>
            <span>Type to locate (⌘K)</span>
        </div>
        <label class="st-label">Coordinate</label>
        <div class="st-field pale">77.5820,12.8290</div>
        <svg class="mouse" viewBox="0 0 28 36"><path d="M4 3L12 1 24 22C27 30 20 36 14 32 10 30 7 24 4 3Z" fill="#fff" stroke="#111" stroke-width="2.500"/><path d="M8 6L16 16" stroke="#111" stroke-width="4"/><circle cx="17" cy="25" r="4" fill="none" stroke="#111" stroke-width="2.500"/><path d="M20 4L24 2M24 8L28 6M2 20L6 22" stroke="#111"/></svg>
        <label class="st-label">Scale</label>
        <div class="st-field dark combo">1:293793<i class="arr"></i></div>
        <svg class="lock" viewBox="0 0 24 36"><path d="M5 14V9C5 0 19 0 19 9V14" fill="none" stroke="#e6e6e6" stroke-width="2.500"/><rect x="2" y="15" width="20" height="19" rx="2" fill="#898989"/></svg>
        <label class="st-label">Magnifier</label>
        <div class="st-field dark spin">100%<span class="spinner"><i class="arr up"></i><i class="arr"></i></span></div>
        <label class="st-label far">Rotation</label>
        <div class="st-field dark spin">0.0 °<span class="spinner"><i class="arr up"></i><i class="arr"></i></span></div>
        <span class="check st-check"><svg viewBox="0 0 26 26"><path d="M6 13L11 21 20 4" fill="none" stroke="#222" stroke-width="2"/></svg></span>
        <label class="st-label">Render</label>
        <div class="st-btn epsg"><svg class="crs" viewBox="0 0 28 28"><circle cx="14" cy="14" r="12" fill="none" stroke="#555" stroke-width="1.500"/><path d="M2 14H26M14 2V26M5 7C10 11 18 11 23 7M5 21C10 17 18 17 23 21M14 2C7 8 7 20 14 26M14 2C21 8 21 20 14 26" fill="none" stroke="#555"/></svg>EPSG:4326</div>
        <div class="st-btn msg"><svg viewBox="0 0 30 32"><path d="M15 3C7 3 2 8 2 14 2 20 7 25 14 25L22 31V24C26 22 28 18 28 14 28 8 23 3 15 3Z" fill="#555"/><circle cx="9" cy="14" r="2" fill="#eee"/><circle cx="15" cy="14" r="2" fill="#eee"/><circle cx="21" cy="14" r="2" fill="#eee"/></svg></div>
    </footer>
</div>
</body>
</html>
```
FILE: styles.css
```css
* {
    box-sizing: border-box;
}
html, body {
    margin: 0;
    background: #fff;
}
body {
    font-family: Inter, "Noto Sans", sans-serif;
    font-size: 24px;
    color: #111;
}
svg {
    display: block;
    overflow: visible;
}
.defs {
    position: absolute;
}
.window {
    width: 2774px;
    height: 1546px;
    background: #707070;
    border-radius: 20px;
    overflow: hidden;
    display: flex;
    flex-direction: column;
}

/* title bar */
.titlebar {
    flex: none;
    height: 56px;
    background: #e7e6ea;
    border-top: 2px solid #f3f3f5;
    border-bottom: 2px solid #4f4f4f;
    display: flex;
    align-items: center;
    justify-content: center;
    position: relative;
}
.lights {
    position: absolute;
    left: 16px;
    top: 13px;
    display: flex;
    gap: 16px;
}
.light {
    width: 24px;
    height: 24px;
    border-radius: 50%;
    background: #d0cfd3;
    border: 1px solid #b5b5b8;
}
.title {
    font-size: 26.500px;
    font-weight: 700;
    color: #a8a8ac;
    margin-right: 2px;
}

/* toolbars */
.toolbars {
    flex: none;
    height: 237px;
}
.tb-row {
    height: 78px;
    display: flex;
    align-items: center;
    padding-left: 8px;
}
.tb-row:first-child {
    height: 76px;
    margin-bottom: 1px;
}
.handle {
    flex: none;
    width: 2px;
    height: 18px;
    background: #a8a8a8;
    border-radius: 1px;
}
.handle.gap {
    margin-left: 11px;
    margin-right: 1px;
}
.tb {
    flex: none;
    width: 68px;
    height: 70px;
    display: flex;
    align-items: center;
    justify-content: center;
    position: relative;
}
.tb.dd {
    width: 92px;
    justify-content: flex-start;
    padding-left: 12px;
}
.tb.off {
    opacity: 0.3;
}
.ic {
    width: 44px;
    height: 44px;
}
.ic.big {
    width: 48px;
    height: 48px;
}
.pressed {
    width: 64px;
    height: 66px;
    border: 3px solid #ececec;
    border-radius: 6px;
    display: flex;
    align-items: center;
    justify-content: center;
    padding-left: 3px;
}
.sep {
    flex: none;
    width: 16px;
    height: 44px;
    display: flex;
    justify-content: flex-end;
    align-items: center;
}
.sep::after {
    content: "";
    width: 2px;
    height: 20px;
    background: #a8a8a8;
}
.sep.dark::after {
    background: #4f4f4f;
}
.sep.s8 { width: 8px; justify-content: center; }
.sep.s8b { width: 8px; }
.sep.s10 { width: 10px; justify-content: center; }
.sep.s13 { width: 13px; }
.sep.s14 { width: 16px; }
.sep.s15 { width: 15px; }
.sep.s17 { width: 17px; }
.arr {
    display: block;
    flex: none;
    width: 0;
    height: 0;
    border-left: 4px solid transparent;
    border-right: 4px solid transparent;
    border-top: 8px solid #b3b3b3;
}
.tb.dd .arr {
    margin-left: 21px;
}
.tb.inner .arr {
    position: absolute;
    right: 6px;
    top: 39px;
}
.style-a {
    font-family: "Liberation Mono", monospace;
    font-size: 26px;
    fill: #e8e8e8;
    stroke: #333;
    stroke-width: 0.6px;
}
.ratio {
    font-family: Inter, sans-serif;
    font-size: 16px;
    font-weight: 700;
    fill: #222;
    text-anchor: middle;
}
.info-big {
    font-family: "Liberation Serif", serif;
    font-style: italic;
    font-weight: 700;
    font-size: 30px;
    fill: #fff;
    text-anchor: middle;
}
.info-i {
    font-family: "Liberation Serif", serif;
    font-style: italic;
    font-weight: 700;
    font-size: 24px;
    fill: #fff;
    text-anchor: middle;
}
.sigma {
    font-family: "Liberation Serif", serif;
    font-size: 52px;
    fill: #b000b0;
    stroke: #3a003a;
    stroke-width: 0.6px;
    text-anchor: middle;
}
.tag-t {
    font-family: "Liberation Sans", sans-serif;
    font-size: 20px;
    font-weight: 700;
    fill: #222;
    text-anchor: middle;
}
.tag-t.red {
    fill: #e00;
}
.help-q {
    font-family: "Liberation Serif", serif;
    font-size: 30px;
    fill: #fff;
    text-anchor: middle;
}
.epsilon {
    font-family: "Liberation Serif", serif;
    font-size: 30px;
    fill: #7a3a8c;
}

/* left docks */
.main {
    flex: 1;
    display: flex;
    min-height: 0;
}
.docks {
    flex: none;
    width: 637px;
    display: flex;
    flex-direction: column;
    padding-left: 3px;
}
.dock-title {
    height: 30px;
    width: 619px;
    padding-right: 50px;
    display: flex;
    align-items: center;
    justify-content: center;
    font-size: 22px;
    position: relative;
}
.dock-close {
    position: absolute;
    right: 4px;
    top: 3px;
    width: 20px;
    height: 22px;
}
.dock-tools {
    display: flex;
    align-items: center;
}
.browser-tools {
    height: 67px;
    gap: 22px;
    padding-left: 13px;
}
.layer-tools {
    height: 65px;
    gap: 22px;
    padding-left: 13px;
}
.tool {
    width: 30px;
    height: 30px;
    flex: none;
}
.tool-dd {
    flex: none;
    width: 30px;
    height: 30px;
    position: relative;
}
.tool-dd .arr {
    position: absolute;
    left: 30px;
    top: 24px;
}
.tool-dd .arr.far {
    left: 40px;
    top: 4px;
}
.epsilon-dd {
    margin-right: 24px;
}
.tree {
    width: 620px;
    background: #b0b0b0;
    border: 2px solid #3b3b3b;
    border-radius: 5px;
    overflow: hidden;
}
.browser-tree {
    height: 317px;
    display: flex;
}
.tree-list {
    flex: 1;
    list-style: none;
    margin: 0;
    padding: 2px 0 0;
}
.tree-list li {
    height: 36px;
    display: flex;
    align-items: center;
    white-space: nowrap;
    font-size: 25.500px;
    color: #111;
}
.branch {
    flex: none;
    margin-left: 14px;
    margin-right: 16px;
    width: 0;
    height: 0;
    border-top: 5px solid transparent;
    border-bottom: 5px solid transparent;
    border-left: 9px solid #7d7d7d;
}
.branch.none {
    border-left-color: transparent;
}
.node {
    flex: none;
    width: 32px;
    height: 32px;
    margin-right: 13px;
}
.scrollbar {
    flex: none;
    width: 17px;
    margin: 2px 3px 1px 0;
    background: #363636;
    border-radius: 4px;
    padding: 1px;
}
.scroll-thumb {
    height: 126px;
    background: #747474;
    border-radius: 3px;
}
.layers {
    margin-top: 19px;
}
.layer-tree {
    height: 664px;
    padding-top: 1px;
}
.layer-row {
    height: 45px;
    display: flex;
    align-items: center;
    padding-left: 47px;
    padding-right: 16px;
}
.layer-row + .layer-row {
    height: 44px;
}
.layer-row.current {
    background: #efefef;
}
.check {
    flex: none;
    width: 26px;
    height: 26px;
    border: 2px solid #3b3b3b;
    border-radius: 6px;
    background: #acacac;
}
.legend {
    flex: none;
    width: 59px;
    display: flex;
    justify-content: center;
    padding-right: 1px;
}
.point {
    width: 8px;
    height: 8px;
}
.swatch {
    width: 32px;
    height: 32px;
    background: #fcc566;
    border: 1px solid #b8894a;
}
.layer-name {
    flex: 1;
    font-size: 26.800px;
    font-weight: 700;
    text-decoration: underline;
    white-space: nowrap;
}
.layer-name.plain {
    font-size: 26px;
    text-decoration: none;
}
.indicator {
    flex: none;
    width: 36px;
    height: 37px;
    margin-left: 8px;
    background: #c4c4c4;
    border: 1px solid #aaa;
    border-radius: 5px;
    padding: 5px;
}

/* map */
.canvas {
    flex: 1;
    margin: 0 3px 5px 0;
    background: #fff;
}
.map {
    width: 2134px;
    height: 1189px;
}
.boundary {
    fill: #fcc566;
    stroke: #232323;
    stroke-width: 1.600;
    stroke-linejoin: round;
}
.stations circle {
    fill: #9a97e4;
    stroke: #2b2b4a;
    stroke-width: 2.500;
}

/* status bar */
.statusbar {
    flex: none;
    height: 59px;
    padding: 5px 0 0 9px;
    display: grid;
    grid-template-columns: 992px 124px 214px 72px 66px 202px 73px 107px 181px 129px 186px 53px 91px 204px 49px;
    align-items: start;
    font-size: 23px;
}
.locator {
    width: 426px;
    height: 47px;
    background: #b0b0b0;
    border: 2px solid #3b3b3b;
    border-radius: 5px;
    display: flex;
    align-items: center;
    color: #5e5e5e;
    font-size: 25px;
    padding-left: 15px;
}
.loc-icon {
    width: 26px;
    height: 28px;
    margin-right: 20px;
}
.st-label {
    height: 46px;
    line-height: 46px;
    white-space: nowrap;
}
.st-label.far {
    padding-left: 21px;
}
.st-field {
    height: 46px;
    display: flex;
    align-items: center;
    border-radius: 5px;
    border: 2px solid #333;
    padding-left: 14px;
}
.st-field.pale {
    background: #b0b0b0;
}
.st-field.dark {
    background: #3c3c3c;
    color: #bdbdbd;
    padding-left: 8px;
}
.combo {
    justify-content: space-between;
    padding-right: 10px;
}
.spin {
    justify-content: space-between;
    padding-right: 8px;
}
.spinner {
    display: flex;
    flex-direction: column;
    gap: 18px;
}
.arr.up {
    border-top: 0;
    border-bottom: 8px solid #b3b3b3;
}
.st-field .arr {
    border-top-color: #cfcfcf;
}
.st-field .arr.up {
    border-bottom-color: #cfcfcf;
}
.mouse {
    width: 28px;
    height: 36px;
    margin: 5px 0 0 11px;
}
.lock {
    width: 24px;
    height: 36px;
    margin: 5px 0 0 26px;
}
.st-check {
    margin: 10px 0 0 15px;
    background: #8c8c8c;
}
.st-btn {
    height: 46px;
    background: #acacac;
    border: 2px solid #3f3f3f;
    border-radius: 7px;
    display: flex;
    align-items: center;
    justify-content: center;
}
.epsg {
    width: 190px;
    gap: 5px;
    font-size: 22px;
}
.crs {
    width: 28px;
    height: 28px;
    flex: none;
}
.msg svg {
    width: 28px;
    height: 30px;
}
```
